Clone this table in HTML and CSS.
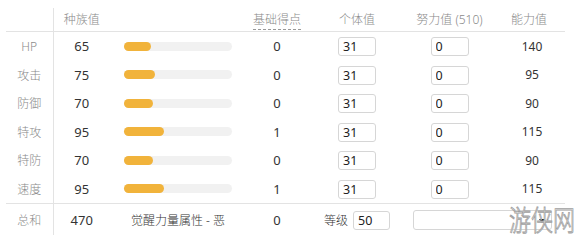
FILE: index.html
```html
<!DOCTYPE html>
<html lang="zh-CN">

<head>
    <meta charset="UTF-8">
    <meta name="viewport" content="width=device-width, initial-scale=1.0">
    <title>能力值计算</title>
    <link rel="stylesheet" href="styles.css">
</head>

<body>
    <div class="page">
        <table class="stats">
            <colgroup>
                <col class="c-name">
                <col class="c-base">
                <col class="c-bar">
                <col class="c-pt">
                <col class="c-iv">
                <col class="c-ev">
                <col class="c-val">
            </colgroup>
            <thead>
                <tr>
                    <th class="name"></th>
                    <th>种族值</th>
                    <th></th>
                    <th><span class="dotted">基础得点</span></th>
                    <th>个体值</th>
                    <th>努力值 (510)</th>
                    <th>能力值</th>
                </tr>
            </thead>
            <tbody>
                <tr>
                    <td class="name">HP</td>
                    <td>65</td>
                    <td><div class="bar"><div class="fill" style="width: 27px;"></div></div></td>
                    <td>0</td>
                    <td><input class="num" type="text" value="31"></td>
                    <td><input class="num" type="text" value="0"></td>
                    <td class="val">140</td>
                </tr>
                <tr>
                    <td class="name">攻击</td>
                    <td>75</td>
                    <td><div class="bar"><div class="fill" style="width: 31px;"></div></div></td>
                    <td>0</td>
                    <td><input class="num" type="text" value="31"></td>
                    <td><input class="num" type="text" value="0"></td>
                    <td class="val">95</td>
                </tr>
                <tr>
                    <td class="name">防御</td>
                    <td>70</td>
                    <td><div class="bar"><div class="fill" style="width: 29px;"></div></div></td>
                    <td>0</td>
                    <td><input class="num" type="text" value="31"></td>
                    <td><input class="num" type="text" value="0"></td>
                    <td class="val">90</td>
                </tr>
                <tr>
                    <td class="name">特攻</td>
                    <td>95</td>
                    <td><div class="bar"><div class="fill" style="width: 40px;"></div></div></td>
                    <td>1</td>
                    <td><input class="num" type="text" value="31"></td>
                    <td><input class="num" type="text" value="0"></td>
                    <td class="val">115</td>
                </tr>
                <tr>
                    <td class="name">特防</td>
                    <td>70</td>
                    <td><div class="bar"><div class="fill" style="width: 29px;"></div></div></td>
                    <td>0</td>
                    <td><input class="num" type="text" value="31"></td>
                    <td><input class="num" type="text" value="0"></td>
                    <td class="val">90</td>
                </tr>
                <tr>
                    <td class="name">速度</td>
                    <td>95</td>
                    <td><div class="bar"><div class="fill" style="width: 40px;"></div></div></td>
                    <td>1</td>
                    <td><input class="num" type="text" value="31"></td>
                    <td><input class="num" type="text" value="0"></td>
                    <td class="val">115</td>
                </tr>
            </tbody>
            <tfoot>
                <tr>
                    <td class="name">总和</td>
                    <td>470</td>
                    <td class="hidden-power">觉醒力量属性 - 恶</td>
                    <td>0</td>
                    <td><span class="lv-label">等级</span><input class="num lv" type="text" value="50"></td>
                    <td colspan="2" class="nature-cell">
                        <div class="select"><span class="arrow"></span></div>
                    </td>
                </tr>
            </tfoot>
        </table>
        <div class="mark">游侠网</div>
    </div>
</body>
</html>
```

FILE: styles.css
```css
/* 通用样式 */
body {
    margin: 0;
    background-color: #fff;
    font-family: "Noto Sans", "Noto Sans CJK SC", sans-serif;
    color: #333;
}

.page {
    position: relative;
    padding: 8px 0 0 6px;
}

/* 能力值表格 */
.stats {
    width: 559px;
    border-collapse: collapse;
    table-layout: fixed;
}

.c-name { width: 47px; }
.c-base { width: 57px; }
.c-bar  { width: 136px; }
.c-pt   { width: 62px; }
.c-iv   { width: 98px; }
.c-ev   { width: 87px; }
.c-val  { width: 72px; }

.stats th {
    height: 22px;
    padding: 0 0 1px;
    font-size: 12px;
    font-weight: 300;
    color: #8a8a8a;
    text-align: center;
    border-bottom: 1px solid #e3e3e3;
}

.stats td {
    height: 28.5px;
    padding: 0;
    font-size: 13px;
    text-align: center;
    vertical-align: middle;
}

.stats .name {
    font-size: 12px;
    font-weight: 300;
    color: #8a8a8a;
    border-right: 1px solid #e3e3e3;
}

.stats tfoot td {
    height: 31px;
    border-top: 1px solid #e3e3e3;
}

.dotted {
    border-bottom: 1px dashed #999;
    padding-bottom: 1px;
}

.val {
    font-size: 12px !important;
    padding-left: 6px !important;
}

/* 种族值条 */
.bar {
    width: 108px;
    height: 9px;
    margin: 0 auto;
    border-radius: 5px;
    background-color: #f1f1f1;
}

.fill {
    height: 100%;
    border-radius: 5px;
    background-color: #f1b33b;
}

/* 输入框 */
.num {
    box-sizing: border-box;
    width: 38px;
    height: 19px;
    padding: 0 4px;
    border: 1px solid #d6d6d6;
    border-radius: 3px;
    font-family: inherit;
    font-size: 12.5px;
    color: #222;
    vertical-align: middle;
}

.lv-label {
    font-size: 12px;
    font-weight: 300;
    margin-right: 5px;
    vertical-align: middle;
}

.lv {
    width: 37px;
}

.hidden-power {
    font-size: 12px !important;
    font-weight: 300;
}

.nature-cell {
    text-align: left !important;
}

.select {
    position: relative;
    box-sizing: border-box;
    width: 139px;
    height: 20px;
    margin-left: 7px;
    border: 1px solid #d6d6d6;
    border-radius: 3px;
}

/* 下拉箭头 */
.arrow {
    position: absolute;
    right: 6px;
    top: 8px;
    width: 0;
    height: 0;
    border-left: 3px solid transparent;
    border-right: 3px solid transparent;
    border-top: 4px solid #111;
}

/* 水印 */
.mark {
    position: absolute;
    left: 509px;
    top: 202px;
    font-family: "Noto Sans CJK SC", sans-serif;
    font-size: 22px;
    font-weight: 300;
    line-height: 24px;
    transform: scaleY(1.3);
    transform-origin: top left;
    color: rgba(255, 255, 255, 0.9);
    -webkit-text-stroke: 0.7px #a0a0a0;
}
```
